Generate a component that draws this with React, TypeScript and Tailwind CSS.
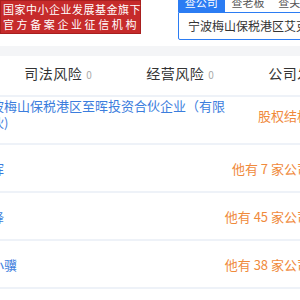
import React from 'react';

const rows = [
  { name: ['宁波梅山保税港区至晖投资合伙企业（有限', '合伙)'], info: '股权结构', twoLine: true },
  { name: ['张晖'], info: '他有 7 家公司' },
  { name: ['王锋'], info: '他有 45 家公司' },
  { name: ['沈小骥'], info: '他有 38 家公司' },
];

export default function App() {
  return (
    <div
      className="w-[300px] h-[300px] overflow-hidden bg-white relative"
      style={{ fontFamily: '"Noto Sans CJK SC", "Noto Sans", sans-serif' }}
    >
      {/* top bar */}
      <div className="h-[46px] flex items-start">
        <div className="w-[141px] h-[34px] bg-[#c62b2b] border border-[#a81f1f] text-white text-[11px] leading-[15px] pt-[1px] pl-[2px] shrink-0">
          <div className="tracking-[0.5px] whitespace-nowrap">国家中小企业发展基金旗下</div>
          <div className="tracking-[2.6px] whitespace-nowrap">官方备案企业征信机构</div>
        </div>
        <div className="ml-[37px] w-[140px] shrink-0">
          <div className="flex h-[22px] -mt-[10px] text-[11px]">
            <div className="w-[50px] bg-[#2b7cf3] text-white flex items-center justify-center pt-[2px]">查公司</div>
            <div className="w-[50px] text-[#555] flex items-center justify-center pt-[2px]">查老板</div>
            <div className="w-[50px] text-[#555] flex items-center justify-center pt-[2px]">查关系</div>
          </div>
          <div className="h-[28px] border border-[#2b7cf3] rounded-bl-[2px] flex items-center pl-[9px] text-[12px] text-[#333] whitespace-nowrap overflow-hidden">
            宁波梅山保税港区艾克斯投资合伙企业
          </div>
        </div>
      </div>

      <div className="h-[10px] bg-[#f4f5f7]" />

      {/* tabs header */}
      <div className="h-[41px] flex items-start pt-[9px] -ml-[3px] w-[370px] border-b-2 border-[#eef2f8]">
        {['司法风险', '经营风险', '公司发展'].map((t) => (
          <div key={t} className="w-[122px] flex justify-center items-baseline whitespace-nowrap">
            <span className="text-[14px] leading-[16px] text-[#333] tracking-[0.5px]">{t}</span>
            <span className="text-[10px] text-[#aaa] ml-[4px]">0</span>
          </div>
        ))}
      </div>

      {/* rows */}
      <div className="-ml-[22px] w-[332px]">
        {rows.map((r) => (
          <div
            key={r.info}
            className={`h-[48px] flex border-b-2 border-[#eef2f8] ${r.twoLine ? 'items-start' : 'items-center'}`}
          >
            <div className="w-[250px] shrink-0 text-[13px] leading-[17px] text-[#3b7ddd] whitespace-nowrap">
              {r.name.map((line) => (
                <div key={line}>{line}</div>
              ))}
            </div>
            <div
              className={`flex-1 min-w-0 flex justify-end whitespace-nowrap text-[13px] leading-[17px] text-[#f08a3c] ${r.twoLine ? 'pt-[10px]' : ''}`}
            >
              {r.info}
            </div>
          </div>
        ))}
      </div>
    </div>
  );
}
